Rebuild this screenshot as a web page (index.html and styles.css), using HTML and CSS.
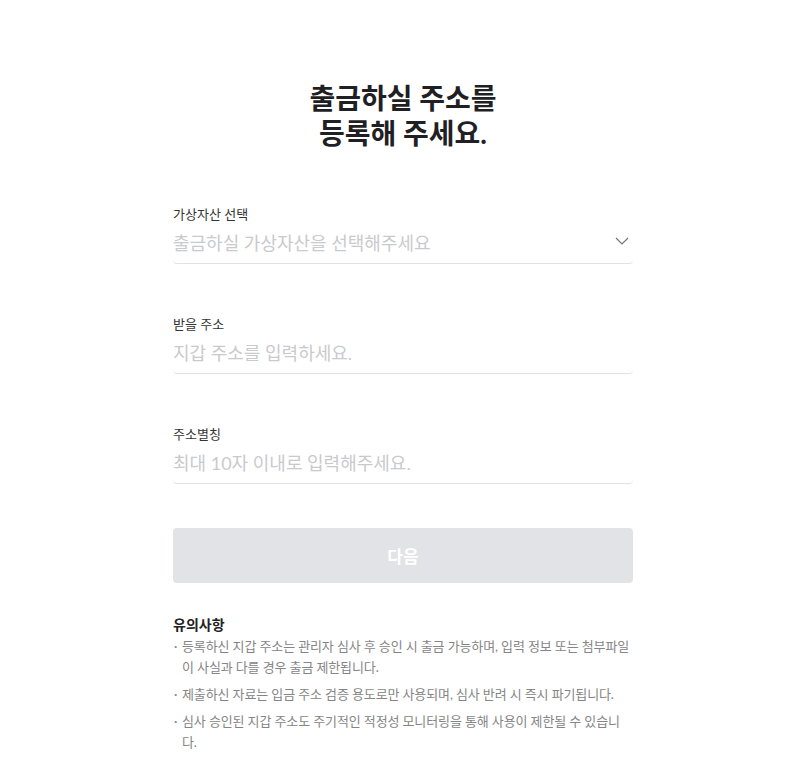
FILE: index.html
```html
<!DOCTYPE html>
<html lang="ko">
<head>
    <meta charset="UTF-8">
    <meta name="viewport" content="width=device-width, initial-scale=1.0">
    <title>출금 주소 등록</title>
    <link rel="stylesheet" href="styles.css">
</head>
<body>
    <div class="wrap">
        <h1>출금하실 주소를<br>등록해 주세요.</h1>

        <!-- 가상자산 선택 -->
        <div class="field">
            <label>가상자산 선택</label>
            <div class="input-row">
                <span class="placeholder">출금하실 가상자산을 선택해주세요</span>
                <svg class="chevron" width="14" height="8" viewBox="0 0 14 8">
                    <path d="M1 1l6 6 6-6" fill="none" stroke="#777" stroke-width="1.2"/>
                </svg>
            </div>
        </div>

        <div class="field">
            <label>받을 주소</label>
            <div class="input-row">
                <input type="text" placeholder="지갑 주소를 입력하세요.">
            </div>
        </div>

        <div class="field">
            <label>주소별칭</label>
            <div class="input-row">
                <input type="text" placeholder="최대 10자 이내로 입력해주세요.">
            </div>
        </div>

        <button class="next" disabled>다음</button>

        <!-- 유의사항 -->
        <div class="notice">
            <h2>유의사항</h2>
            <ul>
                <li>등록하신 지갑 주소는 관리자 심사 후 승인 시 출금 가능하며, 입력 정보 또는 첨부파일이 사실과 다를 경우 출금 제한됩니다.</li>
                <li>제출하신 자료는 입금 주소 검증 용도로만 사용되며, 심사 반려 시 즉시 파기됩니다.</li>
                <li>심사 승인된 지갑 주소도 주기적인 적정성 모니터링을 통해 사용이 제한될 수 있습니다.</li>
            </ul>
        </div>
    </div>
</body>
</html>
```

FILE: styles.css
```css
body {
    margin: 0;
    padding-left: 3px;
    background-color: #fff;
    color: #222;
    font-family: Lato, "Noto Sans CJK KR", sans-serif;
}
.wrap {
    width: 460px;
    margin: 0 auto;
    padding-top: 81px;
}
h1 {
    margin: 0 0 54px;
    font-size: 28px;
    line-height: 35px;
    font-weight: 700;
    text-align: center;
    color: #1f1f24;
}
.field {
    margin-bottom: 51px;
}
.field:nth-of-type(3) {
    margin-bottom: 44px;
}
.field label {
    display: block;
    font-size: 13px;
    line-height: 18px;
    color: #333;
}
.input-row {
    display: flex;
    align-items: center;
    padding: 6px 0 6px;
    border-bottom: 1px solid #e2e2e2;
    border-radius: 0 0 4px 4px;
}
.placeholder {
    flex: 1;
    font-size: 18px;
    line-height: 28px;
    color: #c9cacd;
}
.chevron {
    margin-right: 4px;
    margin-bottom: 4px;
}
input {
    flex: 1;
    height: 28px;
    border: none;
    outline: none;
    padding: 0;
    font-family: inherit;
    font-size: 18px;
    color: #222;
    background: transparent;
}
input::placeholder {
    color: #c9cacd;
}
.next {
    display: block;
    width: 100%;
    height: 55px;
    border: none;
    border-radius: 4px;
    background-color: #e2e3e6;
    color: #fff;
    font-family: inherit;
    font-size: 17px;
    font-weight: 700;
}
.notice {
    margin-top: 31px;
}
.notice h2 {
    margin: 0 0 2px;
    font-size: 14px;
    font-weight: 700;
    color: #222;
}
.notice ul {
    margin: 0;
    padding: 0;
    list-style: none;
}
.notice li {
    position: relative;
    padding-left: 9px;
    margin-bottom: 6px;
    font-size: 13px;
    line-height: 21px;
    letter-spacing: -0.12px;
    color: #858585;
}
.notice li::before {
    content: "·";
    position: absolute;
    left: 1px;
    top: 0;
}
```
